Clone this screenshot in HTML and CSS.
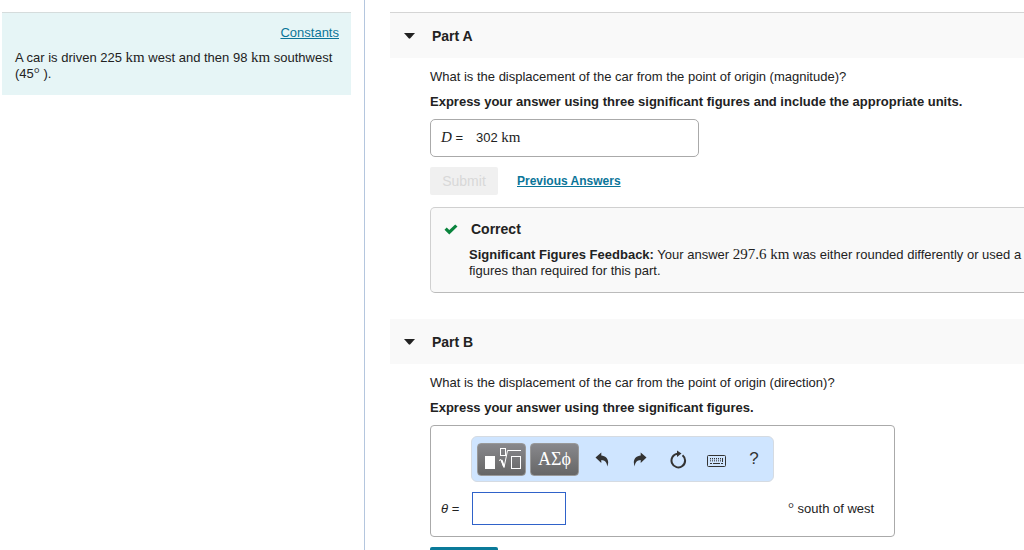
FILE: index.html
```html
<!DOCTYPE html>
<html lang="en">

<head>
    <meta charset="utf-8">
    <title>Displacement of a Car</title>
    <link rel="stylesheet" href="styles.css">
</head>

<body>
    <div class="page">

        <aside class="sidebar">
            <div class="problem">
                <a class="constants" href="#">Constants</a>
                <p>A car is driven 225 <span class="math">km</span> west and then 98 <span class="math">km</span> southwest (45<span class="math">°</span> ).</p>
            </div>
        </aside>

        <main class="parts">

            <section class="part first">
                <h2 class="part-header">
                    <button type="button" class="part-toggle"><svg class="arrow" viewBox="0 0 11 6"><path d="M0 0H11L6.3 5.3Q5.5 6 4.7 5.3Z" /></svg>Part A</button>
                </h2>
                <div class="part-body">
                    <p>What is the displacement of the car from the point of origin (magnitude)?</p>
                    <p class="instructions">Express your answer using three significant figures and include the appropriate units.</p>
                    <div class="answer">
                        <span class="answer-label"><i class="math">D</i> =</span>
                        <span>302 <span class="math">km</span></span>
                    </div>
                    <div class="actions">
                        <button type="submit" class="submit-btn" disabled>Submit</button>
                        <a class="previous" href="#">Previous Answers</a>
                    </div>
                    <div class="feedback">
                        <svg class="check" viewBox="0 0 14 11"><path d="M0.5 5.8L2.7 3.5L5.3 6L11.2 0.4L13.5 2.6L5.3 10.6Z" /></svg>
                        <h3>Correct</h3>
                        <p><b>Significant Figures Feedback:</b> Your answer <span class="math">297.6 km</span> was either rounded differently or used a different number of significant figures than required for this part.</p>
                    </div>
                </div>
            </section>

            <section class="part">
                <h2 class="part-header">
                    <button type="button" class="part-toggle"><svg class="arrow" viewBox="0 0 11 6"><path d="M0 0H11L6.3 5.3Q5.5 6 4.7 5.3Z" /></svg>Part B</button>
                </h2>
                <div class="part-body">
                    <p>What is the displacement of the car from the point of origin (direction)?</p>
                    <p class="instructions">Express your answer using three significant figures.</p>
                    <form class="entry">
                        <div class="toolbar">
                            <button type="button" class="palette-btn" aria-label="Templates">
                                <svg width="40" height="24" viewBox="0 0 40 24">
                                    <rect x="3" y="9" width="10" height="13" fill="#fff" />
                                    <g fill="none" stroke="#fff">
                                        <rect x="18.5" y="1.5" width="5" height="7" />
                                        <path d="M17 13.5L19 12.5L22 20.5L25.5 3.5H39" />
                                        <path d="M19.5 13L22 19.5" stroke-width="2" />
                                        <rect x="29.5" y="9.5" width="9" height="12" />
                                    </g>
                                </svg>
                            </button>
                            <button type="button" class="palette-btn">ΑΣϕ</button>
                            <button type="button" class="tool" aria-label="Undo">
                                <svg width="14" height="15" viewBox="0 0 14 15"><path d="M0.5 5.5L6.3 0.5V3.4C11.5 3.7 15 8.5 12.2 14.5C12 10.5 10 8.2 6.3 8V11Z" /></svg>
                            </button>
                            <button type="button" class="tool" aria-label="Redo">
                                <svg width="14" height="15" viewBox="0 0 14 15"><path d="M13.5 5.5L7.7 0.5V3.4C2.5 3.7 -1 8.5 1.8 14.5C2 10.5 4 8.2 7.7 8V11Z" /></svg>
                            </button>
                            <button type="button" class="tool" aria-label="Reset">
                                <svg width="18" height="19" viewBox="0 0 18 19">
                                    <path d="M13.5 5.2A6.8 6.8 0 1 1 8.5 3.8" fill="none" stroke="#333" stroke-width="2" />
                                    <path d="M8 0.5L12.5 3.5L8 7Z" />
                                </svg>
                            </button>
                            <button type="button" class="tool keyboard" aria-label="Keyboard shortcuts">
                                <svg width="19" height="12" viewBox="0 0 19 12">
                                    <rect x="0.5" y="0.5" width="18" height="11" rx="1" fill="none" stroke="#333" />
                                    <g fill="none" stroke="#333">
                                        <path d="M3 3.5H16" stroke-dasharray="1 1" />
                                        <path d="M3 5.5H14" stroke-width="2" stroke-dasharray="1 1" stroke-opacity="0.7" />
                                        <path d="M15.5 3V7" />
                                        <path d="M3 8.5H5M6 8.5H13M14 8.5H16" />
                                    </g>
                                </svg>
                            </button>
                            <button type="button" class="tool help" aria-label="Help">?</button>
                        </div>
                        <label class="entry-label" for="theta"><i>θ</i> =</label>
                        <input type="text" class="entry-input" id="theta" name="theta">
                        <span class="units"><span class="math">°</span> south of west</span>
                    </form>
                    <div class="actions">
                        <button type="submit" class="submit-btn">Submit</button>
                    </div>
                </div>
            </section>

        </main>
    </div>
</body>

</html>
```
FILE: styles.css
```css
* {
    box-sizing: border-box;
}

body {
    margin: 0;
    background: #fff;
    color: #222;
    font: 13px/16px "Liberation Sans", Arial, sans-serif;
}

p, h2, h3 {
    margin: 0;
}

a {
    color: #0a7599;
}

button {
    font-family: inherit;
    border: none;
    padding: 0;
    cursor: pointer;
}

.page {
    display: flex;
    height: 100vh;
    overflow: hidden;
}

.sidebar {
    flex: 0 0 365px;
    padding: 12px 13px 0 2px;
    border-right: 1px solid #b4c6de;
}

.problem {
    display: flex;
    flex-direction: column;
    gap: 9px;
    padding: 12px 12px 13px 13px;
    border-top: 1px solid #d5dcdc;
    background: #e6f5f6;
}

.constants {
    align-self: flex-end;
}

.math {
    font-family: "Liberation Serif", "Times New Roman", serif;
    font-size: 15px;
    line-height: 14px;
}

.parts {
    flex: 1 0 auto;
    width: 870px;
    padding: 12px 0 0 25px;
}

.part {
    margin-bottom: 26px;
}

.part.first {
    border-top: 1px solid #d5d5d5;
}

.part-header {
    display: flex;
    height: 45px;
    background: #f9f9f9;
}

.part-toggle {
    display: flex;
    align-items: center;
    gap: 17px;
    padding: 0 14px;
    background: none;
    color: #222;
    font-size: 14px;
    font-weight: bold;
}

.arrow {
    width: 11px;
    height: 6px;
    fill: #222;
}

.part-body {
    padding: 11px 0 0 40px;
}

.instructions {
    margin: 9px 0;
    font-weight: bold;
}

.answer {
    display: flex;
    align-items: center;
    width: 269px;
    height: 38px;
    padding: 0 10px;
    border: 1px solid #aaa;
    border-radius: 5px;
}

.answer-label {
    width: 35px;
}

.actions {
    display: flex;
    align-items: center;
    gap: 19px;
    margin: 10px 0 12px;
}

.submit-btn {
    width: 68px;
    height: 28px;
    border-radius: 2px;
    background: #0a7a99;
    color: #fff;
    font-size: 14px;
}

.submit-btn:disabled {
    background: #f0f0f0;
    color: #d8d8d8;
    cursor: default;
}

.previous {
    font-size: 12px;
    font-weight: bold;
}

.feedback {
    display: grid;
    grid-template-columns: 25px 1fr;
    align-items: center;
    row-gap: 10px;
    padding: 13px;
    border: 1px solid #d0d0d0;
    border-bottom-color: #bbb;
    border-radius: 5px;
    background: #f9f9f9;
}

.feedback h3 {
    padding-left: 2px;
    font-size: 14px;
    line-height: 16px;
}

.feedback p {
    grid-column: 2;
    max-width: 750px;
}

.check {
    width: 14px;
    height: 11px;
    fill: #0a843d;
}

.entry {
    display: grid;
    grid-template-columns: 30px 303px 1fr;
    align-items: center;
    gap: 10px 0;
    width: 465px;
    padding: 10px 10px 11px;
    border: 1px solid #aaa;
    border-radius: 4px;
}

.toolbar {
    grid-column: 2;
    display: flex;
    align-items: center;
    height: 46px;
    padding-left: 5px;
    border: 1px solid #d5dbe2;
    border-radius: 6px;
    background: #cfe5ff;
}

.palette-btn {
    display: flex;
    align-items: center;
    justify-content: center;
    width: 49px;
    height: 33px;
    margin-right: 4px;
    border: 1px solid #999;
    border-radius: 4px;
    background: linear-gradient(#88888c, #666);
    color: #fff;
    font: 18px "Liberation Serif", "Times New Roman", serif;
}

.tool {
    display: flex;
    align-items: center;
    justify-content: center;
    width: 38px;
    height: 33px;
    background: none;
    color: #333;
    fill: #333;
}

.keyboard {
    padding-top: 4px;
}

.help {
    font-size: 17px;
}

.entry-label {
    grid-column: 1;
}

.entry-input {
    width: 94px;
    height: 33px;
    margin-left: 1px;
    padding: 0 6px;
    border: 1px solid #2f62c9;
    font: inherit;
}

.units {
    padding-left: 14px;
}
```
